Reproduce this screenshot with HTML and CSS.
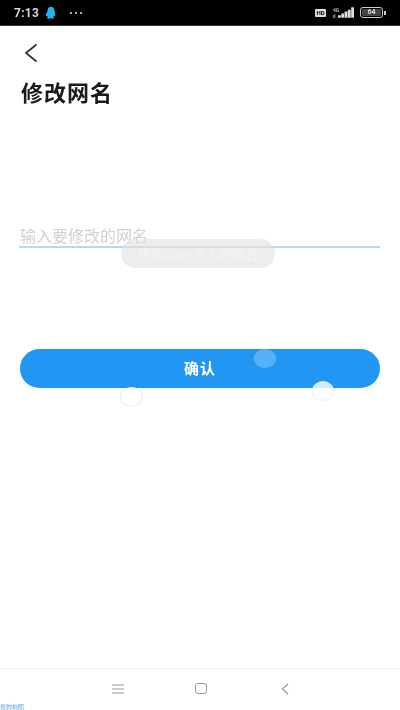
FILE: index.html
```html
<!DOCTYPE html>
<html lang="zh-CN">
<head>
<meta charset="utf-8">
<title>修改网名</title>
<link rel="stylesheet" href="styles.css">
</head>
<body>
<div class="screen">
  <header class="status">
    <div class="status-left">
      <span class="time">7:13</span>
      <svg class="qq" viewBox="0 0 14 16"><path d="M7 .8C4.2.8 3 3 3 5.2c0 1-.9 2.2-1.6 3.800-.6 1.400-.5 2.600-.1 2.700.3.100.8-.4 1.100-.9.200.8.600 1.500 1.100 2-.8.300-1.300.8-1.100 1.300.3.600 2.500.6 3.500.1.400-.2.800-.2 1.200 0 1 .5 3.200.5 3.500-.1.200-.5-.3-1-1.100-1.300.5-.5.900-1.200 1.100-2 .3.500.8 1 1.100.9.400-.1.500-1.300-.1-2.700C11.900 7.400 11 6.200 11 5.200 11 3 9.800.8 7 .8z"/></svg>
      <span class="dots"><i></i><i></i><i></i></span>
    </div>
    <div class="status-right">
      <span class="hd">HD</span>
      <span class="net"><span class="net-label">4G</span><span class="net-label">ıl</span></span>
      <svg class="signal" viewBox="0 0 17 11"><path d="M0 8.500h3V11H0zM3.500 6.500h3V11h-3zM7 4.500h3V11H7zM10.500 2.500h3V11h-3zM14 0h3v11h-3z"/></svg>
      <span class="battery"><span class="battery-fill">64</span></span><span class="battery-tip"></span>
    </div>
  </header>

  <main class="content">
    <button class="back" aria-label="返回">
      <svg viewBox="0 0 14 20"><path d="M12.500 1.500 2 10l10.500 8.500"/></svg>
    </button>
    <h1 class="title">修改网名</h1>
    <div class="field">
      <span class="placeholder">输入要修改的网名</span>
      <div class="toast">修改Skey主人的网名</div>
    </div>
    <div class="action">
      <button class="confirm">确认</button>
      <span class="bubble bubble-a"></span>
      <span class="bubble bubble-b"></span>
      <span class="bubble bubble-c"></span>
    </div>
  </main>

  <nav class="navbar">
    <svg class="nav-menu" viewBox="0 0 12 10"><path d="M0 1h12M0 5h12M0 9h12"/></svg>
    <span class="nav-home"></span>
    <svg class="nav-back" viewBox="0 0 8 12"><path d="M7 1 1.500 6 7 11"/></svg>
  </nav>
  <div class="tag">搜狗拍照</div>
</div>
</body>
</html>
```
FILE: styles.css
```css
* { box-sizing: border-box; }
html, body { margin: 0; padding: 0; }
body { background: #fff; font-family: "Noto Sans CJK SC", "Noto Sans", sans-serif; }
.screen { width: 400px; height: 710px; display: flex; flex-direction: column; overflow: hidden; position: relative; background: #fff; filter: blur(.4px); }

.status { height: 26px; flex: none; background: #000; color: #ddd; display: flex; justify-content: space-between; align-items: center; padding: 0 14px; border-bottom: 1px solid #333; }
.status-left { display: flex; align-items: center; }
.time { font: 700 12px "Roboto", sans-serif; color: #d8d8d8; letter-spacing: .3px; }
.qq { width: 12px; height: 14px; margin-left: 6px; fill: #1fb6f5; }
.dots { display: flex; gap: 3px; margin-left: 13px; }
.dots i { width: 2px; height: 2px; border-radius: 50%; background: #ddd; }
.status-right { display: flex; align-items: center; }
.hd { width: 11px; height: 8px; background: #ddd; color: #000; font: 700 6px/8px "Roboto", sans-serif; text-align: center; border-radius: 1px; margin-right: 7px; }
.net { display: flex; flex-direction: column; width: 5px; }
.net-label { font: 700 5px/6px "Roboto", sans-serif; color: #bbb; }
.signal { width: 16px; height: 11px; fill: #ddd; margin-right: 6px; }
.battery { width: 23px; height: 11px; border: 1px solid #ccc; border-radius: 3px; padding: 1px; display: flex; }
.battery-fill { flex: 1; background: #444; border-radius: 1px; color: #ddd; font: 700 7px/7px "Roboto", sans-serif; text-align: center; }
.battery-tip { width: 2px; height: 4px; background: #ccc; margin-left: 1px; }

.content { flex: 1; display: flex; flex-direction: column; padding: 0 20px; min-height: 0; }
.back { width: 14px; height: 20px; margin: 17px 0 0 4px; padding: 0; border: 0; background: none; display: block; }
.back svg { width: 14px; height: 20px; display: block; fill: none; stroke: #333; stroke-width: 1.800; }
.title { margin: 12px 0 0 1px; font-size: 22px; line-height: 32px; font-weight: 700; color: #1a1a1a; letter-spacing: 1px; }
.field { position: relative; margin: 112px 0 0 -1px; height: 29px; width: 361px; border-bottom: 2px solid #b4daf2; display: flex; align-items: flex-end; padding: 0 0 0 1px; }
.placeholder { font-size: 16px; line-height: 22px; color: #d0d0d0; }
.toast { position: absolute; left: 102px; top: 20px; width: 154px; height: 29px; border-radius: 15px; background: rgba(225,225,225,.6); color: #f4f4f4; font-size: 13px; line-height: 29px; text-align: center; white-space: nowrap; }
.action { position: relative; margin-top: 101px; }
.confirm { display: block; width: 360px; height: 39px; border: 0; border-radius: 20px; background: #2196f3; color: #fff; font: 700 15px "Noto Sans CJK SC", sans-serif; letter-spacing: 1px; padding: 0 0 2px; }
.bubble { position: absolute; border-radius: 50%; }
.bubble-a { left: 234px; top: 0; width: 22px; height: 19px; background: rgba(255,255,255,.25); }
.bubble-b { left: 100px; top: 38px; width: 23px; height: 20px; background: #fff; border: 1px solid #eee; }
.bubble-c { left: 292px; top: 32px; width: 22px; height: 20px; background: rgba(255,255,255,.8); border: 1px solid rgba(235,235,235,.7); }

.navbar { flex: none; height: 42px; border-top: 1px solid #f2f2f2; display: flex; align-items: center; justify-content: center; padding: 0 0 2px 0; }
.nav-menu { width: 12px; height: 10px; fill: none; stroke: #999; stroke-width: 1; }
.nav-home { width: 12px; height: 11px; border: 1.500px solid #999; border-radius: 3px; margin: 0 74px 0 71px; }
.nav-back { width: 8px; height: 12px; fill: none; stroke: #999; stroke-width: 1.200; }
.tag { position: absolute; left: 0; bottom: 0; font-size: 6px; line-height: 7px; color: #5fa9dc; }
```
